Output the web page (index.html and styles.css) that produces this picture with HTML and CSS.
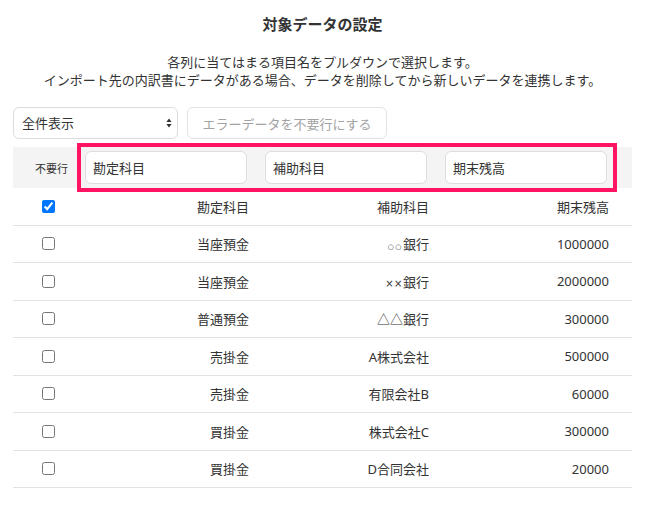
FILE: index.html
```html
<!DOCTYPE html>
<html lang="ja">
<head>
    <meta charset="UTF-8">
    <meta name="viewport" content="width=device-width, initial-scale=1.0">
    <title>対象データの設定</title>
    <link rel="stylesheet" href="styles.css">
</head>
<body>
    <div class="wrap">
        <h1 class="title">対象データの設定</h1>
        <p class="desc">各列に当てはまる項目名をプルダウンで選択します。<br>インポート先の内訳書にデータがある場合、データを削除してから新しいデータを連携します。</p>

        <div class="toolbar">
            <div class="sel_box">
                <select class="sel">
                    <option>全件表示</option>
                </select>
                <svg class="sel_arrow" width="6" height="10" viewBox="0 0 6 10"><path d="M3 0.5 L5.6 4 L0.4 4 Z M3 9.5 L5.6 6 L0.4 6 Z" fill="#333"/></svg>
            </div>
            <button class="btn" disabled>エラーデータを不要行にする</button>
        </div>

        <div class="head_row">
            <div class="head_label">不要行</div>
            <div class="head_cols">
                <input class="col_input" type="text" value="勘定科目" readonly>
                <input class="col_input" type="text" value="補助科目" readonly>
                <input class="col_input" type="text" value="期末残高" readonly>
            </div>
        </div>

        <div class="rows">
            <div class="row">
                <div class="cell_chk"><input type="checkbox" checked></div>
                <div class="cell">勘定科目</div>
                <div class="cell">補助科目</div>
                <div class="cell">期末残高</div>
            </div>
            <div class="row">
                <div class="cell_chk"><input type="checkbox"></div>
                <div class="cell">当座預金</div>
                <div class="cell"><span class="mark_o">○○</span>銀行</div>
                <div class="cell">1000000</div>
            </div>
            <div class="row">
                <div class="cell_chk"><input type="checkbox"></div>
                <div class="cell">当座預金</div>
                <div class="cell"><span class="mark_x">××</span>銀行</div>
                <div class="cell">2000000</div>
            </div>
            <div class="row">
                <div class="cell_chk"><input type="checkbox"></div>
                <div class="cell">普通預金</div>
                <div class="cell">△△銀行</div>
                <div class="cell">300000</div>
            </div>
            <div class="row">
                <div class="cell_chk"><input type="checkbox"></div>
                <div class="cell">売掛金</div>
                <div class="cell">A株式会社</div>
                <div class="cell">500000</div>
            </div>
            <div class="row">
                <div class="cell_chk"><input type="checkbox"></div>
                <div class="cell">売掛金</div>
                <div class="cell">有限会社B</div>
                <div class="cell">60000</div>
            </div>
            <div class="row">
                <div class="cell_chk"><input type="checkbox"></div>
                <div class="cell">買掛金</div>
                <div class="cell">株式会社C</div>
                <div class="cell">300000</div>
            </div>
            <div class="row">
                <div class="cell_chk"><input type="checkbox"></div>
                <div class="cell">買掛金</div>
                <div class="cell">D合同会社</div>
                <div class="cell">20000</div>
            </div>
        </div>
    </div>
</body>
</html>
```

FILE: styles.css
```css
*{
    margin: 0;
    padding: 0;
    box-sizing: border-box;
}
body{
    background: #fff;
    color: #333;
    font-family: "Noto Sans", "Noto Sans CJK JP", sans-serif;
    font-size: 13px;
}
.wrap{
    width: 619px;
    margin-left: 13px;
}
.title{
    font-size: 15px;
    font-weight: bold;
    line-height: 20px;
    text-align: center;
    padding-top: 14px;
}
.desc{
    text-align: center;
    line-height: 18px;
    margin-top: 19px;
}
.toolbar{
    display: flex;
    gap: 9px;
    margin-top: 18px;
}
.sel_box{
    position: relative;
    width: 165px;
    height: 32px;
}
.sel{
    appearance: none;
    -webkit-appearance: none;
    width: 100%;
    height: 100%;
    border: 1px solid #dcdcdc;
    border-radius: 6px;
    background: #fff;
    padding: 0 8px;
    font-family: "Noto Sans", "Noto Sans CJK JP", sans-serif;
    font-size: 13px;
    color: #333;
}
.sel_arrow{
    position: absolute;
    right: 6px;
    top: 11px;
}
.btn{
    width: 200px;
    height: 32px;
    border: 1px solid #e3e3e3;
    border-radius: 6px;
    background: #fff;
    font-family: "Noto Sans", "Noto Sans CJK JP", sans-serif;
    font-size: 13px;
    color: #a3a3a3;
}
.head_row{
    display: flex;
    align-items: center;
    height: 41px;
    margin-top: 8px;
    background: #f5f4f4;
}
.head_label{
    width: 68px;
    text-align: right;
    padding-right: 13px;
    font-size: 11px;
}
.head_cols{
    display: flex;
    gap: 18px;
    width: 532px;
    height: 41px;
    padding: 4px 6px 4px 4px;
    outline: 4px solid #ff1464;
}
.col_input{
    width: 162px;
    height: 33px;
    border: 1px solid #dedede;
    border-radius: 6px;
    background: #fff;
    padding: 0 7px;
    font-family: "Noto Sans", "Noto Sans CJK JP", sans-serif;
    font-size: 13px;
    color: #333;
    outline: none;
}
.row{
    display: grid;
    grid-template-columns: 64px 180px 180px 180px 15px;
    align-items: center;
    height: 37.5px;
    border-bottom: 1px solid #e2e2e2;
}
.cell_chk{
    padding-left: 29px;
    display: flex;
    align-items: center;
}
.cell_chk input{
    width: 13px;
    height: 13px;
    margin: 0;
}
.cell{
    text-align: right;
    padding-right: 8px;
}
.mark_o{
    font-family: "DejaVu Sans", sans-serif;
    font-size: 7px;
    letter-spacing: 1.5px;
}
.mark_x{
    font-family: "DejaVu Sans", sans-serif;
    font-size: 10px;
    letter-spacing: 0.5px;
}
```
